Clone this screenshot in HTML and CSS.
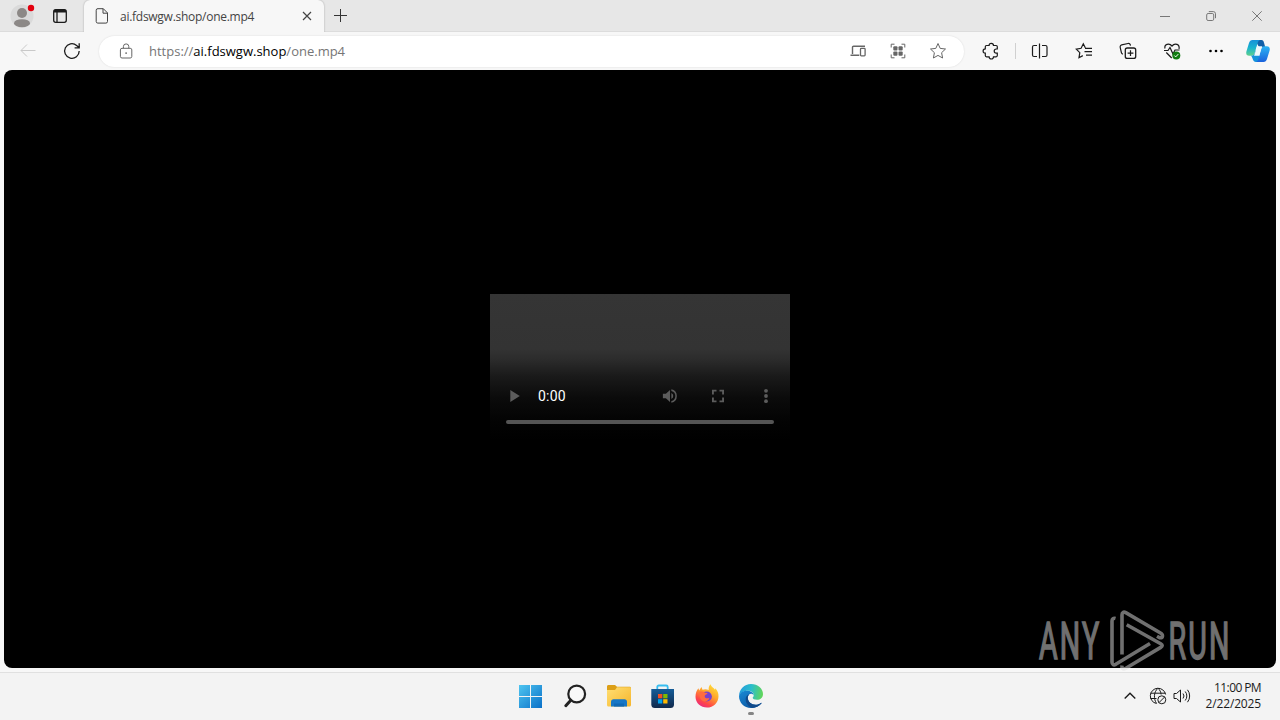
FILE: index.html
```html
<!DOCTYPE html>
<html lang="en">

<head>
    <meta charset="UTF-8" />
    <meta name="viewport" content="width=device-width, initial-scale=1.0" />
    <title>ai.fdswgw.shop/one.mp4</title>
    <link rel="stylesheet" href="styles.css">
</head>

<body>
    <div class="titlebar">
        <div class="profile">
            <svg width="30" height="30" viewBox="0 0 30 30">
                <circle cx="15" cy="15" r="11.5" fill="#dadada" />
                <circle cx="15" cy="12" r="5" fill="#8c8886" />
                <ellipse cx="15" cy="22.2" rx="8" ry="4" fill="#8c8886" />
                <circle cx="24" cy="7" r="3.2" fill="#e3000f" />
            </svg>
        </div>
        <div class="tab-actions">
            <svg class="line" width="16" height="16" viewBox="0 0 16 16">
                <rect x="1.7" y="1.7" width="12.6" height="12.6" rx="2" stroke-width="1.3" />
                <path d="M2 3.200h12" stroke-width="2.600" />
                <path d="M5 4v10" stroke-width="1.300" />
            </svg>
        </div>
        <div class="tab">
            <svg class="line" width="14" height="16" viewBox="0 0 14 16">
                <path d="M2.5.7h5.8l4.2 4.2v8.6a1.6 1.6 0 0 1-1.6 1.6H2.8a1.6 1.6 0 0 1-1.6-1.6V2.2A1.5 1.5 0 0 1 2.7.7zM8 .7v4.5h4.5" />
            </svg>
            <span class="tab-title">ai.fdswgw.shop/one.mp4</span>
            <svg class="line tab-close" width="10" height="10" viewBox="0 0 10 10">
                <path d="M1 1l8 8M9 1l-8 8" stroke-width="1.200" />
            </svg>
        </div>
        <svg class="line new-tab" width="14" height="14" viewBox="0 0 14 14">
            <path d="M6.500 0v13M0 6.500h13" />
        </svg>
        <div class="window-buttons">
            <svg class="line" width="10" height="10" viewBox="0 0 10 10"><path d="M0 5.5h10" /></svg>
            <svg class="line" width="10" height="10" viewBox="0 0 10 10">
                <rect x=".7" y="2.5" width="7" height="7" rx="1.4" />
                <path d="M2.8.6h4.5a2.2 2.2 0 0 1 2.2 2.2v4.4" />
            </svg>
            <svg class="line" width="10" height="10" viewBox="0 0 10 10"><path d="M.3.3l9.4 9.4M9.7.3L.3 9.7" /></svg>
        </div>
    </div>

    <div class="toolbar">
        <div class="tool disabled">
            <svg class="line" width="16" height="14" viewBox="0 0 16 14"><path d="M15.5 6.500H1M7 .5L1 6.500l6 6" /></svg>
        </div>
        <div class="tool">
            <svg class="line" width="18" height="18" viewBox="0 0 18 18">
                <path d="M16.2 9A7.3 7.3 0 1 1 13.6 3.4L16 5.6M16.2 1.2v4.6h-4.6" stroke-width="1.3" />
            </svg>
        </div>
        <div class="address">
            <svg class="line lock" width="16" height="16" viewBox="0 0 16 16">
                <rect x="2.4" y="5.3" width="11.4" height="9.7" rx="1.6" />
                <path d="M5.4 5.3V3.6a2.7 2.7 0 0 1 5.4 0v1.7" />
                <circle cx="8.1" cy="10.1" r=".9" fill="currentColor" stroke="none" />
            </svg>
            <span class="url">https://<b>ai.fdswgw.shop</b>/one.mp4</span>
            <div class="address-icons">
                <span>
                    <svg class="line" width="16" height="14" viewBox="0 0 16 14">
                        <path d="M2.5 10V3.2a1 1 0 0 1 1-1H15M.5 11.2h8.8" stroke-width="1.4" />
                        <rect x="10.5" y="4.4" width="4.6" height="7.4" rx=".8" stroke-width="1.300" />
                    </svg>
                </span>
                <span>
                    <svg class="line" width="16" height="16" viewBox="0 0 16 16">
                        <path d="M1.2 4.5V1.2h3.3M11.5 1.2h3.3v3.3M14.8 11.5v3.3h-3.3M4.5 14.8H1.2v-3.3" />
                        <g fill="currentColor" stroke="none">
                            <rect x="3.3" y="3.3" width="4.2" height="4.2" rx="1" />
                            <rect x="8.5" y="3.3" width="4.2" height="4.2" rx="1" />
                            <rect x="3.3" y="8.5" width="4.2" height="4.2" rx="1" />
                            <rect x="8.5" y="8.5" width="4.2" height="4.2" rx="1" />
                        </g>
                    </svg>
                </span>
                <span>
                    <svg class="line" width="18" height="18" viewBox="0 0 18 18">
                        <path d="M9 1.5l2.2 4.9 5.3.6-3.9 3.7 1 5.3L9 13.4 4.4 16l1-5.3L1.500 7l5.300-.6z" />
                    </svg>
                </span>
            </div>
        </div>
        <div class="tool">
            <svg class="line" width="18" height="18" viewBox="0 0 18 18">
                <path d="M4.500 3.500h2.600a2.200 2.200 0 0 1 4.400 0h2.600a1.200 1.200 0 0 1 1.200 1.200v2.300h-1a2.100 2.100 0 0 0 0 4.200h1v2.400a1.200 1.200 0 0 1-1.200 1.200h-2.600a2.200 2.200 0 0 1-4.400 0H4.500a1.200 1.200 0 0 1-1.200-1.200v-2.400a2.200 2.200 0 0 1 0-4.400V4.700a1.200 1.200 0 0 1 1.200-1.200z" stroke-width="1.200" />
            </svg>
        </div>
        <div class="separator"></div>
        <div class="tool">
            <svg class="line" width="18" height="18" viewBox="0 0 18 18">
                <path d="M8.500 1.500v15M6 3.500H3a1.500 1.500 0 0 0-1.500 1.500v8a1.500 1.500 0 0 0 1.500 1.500h3M11 3.500h3.500a1.500 1.500 0 0 1 1.500 1.500v8a1.500 1.500 0 0 1-1.500 1.500H11" stroke-width="1.2" />
            </svg>
        </div>
        <div class="tool">
            <svg class="line" width="18" height="18" viewBox="0 0 18 18">
                <path d="M10.300 5.800L8.300 1.800 6.100 6.300l-4.800.8 3.500 3.500L4 15.700l3.800-2.100M10 6.300h7M9.500 9.700H17M11 13.200h6" stroke-width="1.200" />
            </svg>
        </div>
        <div class="tool">
            <svg class="line" width="18" height="18" viewBox="0 0 18 18">
                <rect x="6.300" y="6" width="10.400" height="10.400" rx="2" stroke-width="1.300" />
                <path d="M11.500 8.300v5.800M8.600 11.200h5.800M3.900 12.200a2 2 0 0 1-1.500-1.500L1.200 5.300a2 2 0 0 1 1.500-2.400l6.300-1.400a2 2 0 0 1 2.300 1.300l.2.800" stroke-width="1.200" />
            </svg>
        </div>
        <div class="tool">
            <svg class="line" width="18" height="18" viewBox="0 0 18 18">
                <path d="M2 6.500C1 2.500 6 .3 9 4c3-3.700 8-1.500 7 3M1 8.500h4l2-3 3 6.500 2-4h4.500M3.300 10.500L8.700 16" stroke-width="1.200" />
                <circle cx="13.300" cy="13.400" r="4" fill="#107c10" stroke="none" />
                <path d="M11.300 13.500l1.400 1.400 2.600-2.800" stroke="#fff" />
            </svg>
        </div>
        <div class="tool">
            <svg width="16" height="4" viewBox="0 0 16 4">
                <circle cx="2.500" cy="2" r="1.300" /><circle cx="8" cy="2" r="1.300" /><circle cx="13.500" cy="2" r="1.300" />
            </svg>
        </div>
        <div class="tool copilot">
            <svg width="24" height="24" viewBox="0 0 24 24">
                <defs>
                    <linearGradient id="cpLeft" x1="0" y1="0" x2="0" y2="1">
                        <stop offset="0" stop-color="#1690d8" />
                        <stop offset=".5" stop-color="#19b4cf" />
                        <stop offset="1" stop-color="#5fd08c" />
                    </linearGradient>
                    <linearGradient id="cpRight" x1="0" y1="0" x2="0" y2="1">
                        <stop offset="0" stop-color="#2bb4f4" />
                        <stop offset="1" stop-color="#1a62dc" />
                    </linearGradient>
                </defs>
                <path d="M9 1h6.500c1.600 0 2 1 2.500 2.800l1.200 4.200H13z" fill="#1260a8" />
                <path d="M6.500 1H14c-1.500.5-2 1.800-2.500 3.500L8.700 14c-.5 1.800-1.300 2.700-3.200 2.700H3.200C.7 16.700-.2 15 .4 12.500L3 4c.7-2 1.700-3 3.500-3z" fill="url(#cpLeft)" />
                <path d="M5 16.700c2.400 0 3.200-.9 3.700-2.700l1-3 4.300 7-1.500 5H10c-3.500 0-3-4.500-5-6.300z" fill="#1593dc" />
                <path d="M17.500 23H10c1.500-.5 2-1.800 2.500-3.500L15.300 10c.5-1.800 1.300-2.700 3.200-2.700h2.300c2.500 0 3.400 1.700 2.800 4.200L21 20c-.7 2-1.700 3-3.500 3z" fill="url(#cpRight)" />
                <path d="M11.800 7.300h4.700c-.8.700-1.100 1.700-1.400 2.700l-2 6.700H8c.5-.8.700-1.700 1-2.700l1.500-5c.3-1 .6-1.500 1.300-1.700z" fill="#eef8fb" />
            </svg>
        </div>
    </div>

    <div class="page">
        <div class="player">
            <div class="controls">
                <svg class="play" width="24" height="24" viewBox="0 0 24 24"><path d="M8.300 6v12l9.500-6z" /></svg>
                <span class="time">0:00</span>
                <svg width="18" height="18" viewBox="0 0 24 24">
                    <path d="M2.500 9v6h4l5.500 5V4L6.500 9zM16.300 12a4 4 0 0 0-2.500-4v8a4 4 0 0 0 2.500-4zM13.800 3v2.200a7 7 0 0 1 0 13.600V21a9.200 9.200 0 0 0 0-18z" />
                </svg>
                <svg width="18" height="18" viewBox="0 0 24 24">
                    <path d="M4 14H6.500v4H10v2.300H4zM4 10h2.500V6H10V3.700H4zM17.500 18H14v2.300h6V14h-2.500zM14 3.700V6h3.500v4H20V3.700z" />
                </svg>
                <svg width="18" height="18" viewBox="0 0 18 18">
                    <circle cx="9" cy="3.800" r="1.900" /><circle cx="9" cy="9" r="1.900" /><circle cx="9" cy="14.200" r="1.900" />
                </svg>
            </div>
            <div class="timeline"></div>
        </div>
    </div>

    <div class="taskbar">
        <div class="apps">
            <div class="app">
                <svg width="24" height="24" viewBox="0 0 24 24">
                    <defs>
                        <linearGradient id="win" x1="0" y1="0" x2="1" y2="1">
                            <stop offset="0" stop-color="#4fc5f0" />
                            <stop offset="1" stop-color="#0a70c8" />
                        </linearGradient>
                    </defs>
                    <path d="M0 1h11v11H0zM12 1h11v11H12zM0 13h11v11H0zM12 13h11v11H12z" fill="url(#win)" />
                </svg>
            </div>
            <div class="app">
                <svg width="24" height="24" viewBox="0 0 24 24" fill="none" stroke="#222">
                    <circle cx="13.700" cy="10" r="8.400" stroke-width="2.200" fill="#f8f8f8" />
                    <path d="M7.800 16.200L2.800 21.700" stroke-width="3" stroke-linecap="round" />
                </svg>
            </div>
            <div class="app">
                <svg width="24" height="24" viewBox="0 0 24 24">
                    <defs>
                        <linearGradient id="folder" x1="0" y1="0" x2="1" y2="1">
                            <stop offset="0" stop-color="#ffdf73" />
                            <stop offset="1" stop-color="#f6b52c" />
                        </linearGradient>
                    </defs>
                    <path d="M0 2.500C0 1.600.600 1 1.500 1H8l2 1.800h12.500c.9 0 1.500.6 1.500 1.500V9H0z" fill="#dc9f17" />
                    <path d="M0 6h8l2-2.800h12.500c.9 0 1.500.6 1.500 1.500V21c0 .9-.6 1.500-1.500 1.500h-21C.6 22.500 0 21.900 0 21z" fill="url(#folder)" />
                    <path d="M4 22.500v-4.800c0-1.500 1-2.500 2.500-2.500h11c1.500 0 2.500 1 2.500 2.500v4.800z" fill="#1676c5" />
                    <path d="M7 19.500h10v3H7z" fill="#0f68b4" />
                </svg>
            </div>
            <div class="app">
                <svg width="24" height="24" viewBox="0 0 24 24">
                    <defs>
                        <linearGradient id="bag" x1="0" y1="0" x2="0" y2="1">
                            <stop offset="0" stop-color="#155d98" />
                            <stop offset="1" stop-color="#10294c" />
                        </linearGradient>
                    </defs>
                    <path d="M6.300 6V3c0-.9.600-1.500 1.500-1.500h7.400c.9 0 1.500.6 1.500 1.500V6" fill="none" stroke="#37bdf0" stroke-width="1.800" />
                    <path d="M.3 5H23v15.500c0 2.400-1.300 3.500-3.500 3.500H3.800C1.600 24 .3 22.900.3 20.500z" fill="url(#bag)" />
                    <path d="M7 10h4.300v4.300H7z" fill="#f25022" />
                    <path d="M12.200 10h4.300v4.300h-4.300z" fill="#7fba00" />
                    <path d="M7 15.200h4.300v4.300H7z" fill="#00a4ef" />
                    <path d="M12.200 15.200h4.300v4.300h-4.300z" fill="#ffb900" />
                </svg>
            </div>
            <div class="app">
                <svg width="24" height="24" viewBox="0 0 24 24">
                    <defs>
                        <linearGradient id="fox" x1=".8" y1="0" x2=".2" y2="1">
                            <stop offset="0" stop-color="#ffe23c" />
                            <stop offset=".4" stop-color="#ffa52c" />
                            <stop offset=".75" stop-color="#ff4748" />
                            <stop offset="1" stop-color="#e5258c" />
                        </linearGradient>
                    </defs>
                    <path d="M15.500.3c.8 2.600 3 3.300 4.500 5.400l.4-1.500c2.300 2.600 3.200 5.300 3.100 8.300C23.300 19 18.300 23.600 12 23.600S.5 19 .5 12.800c0-3.300 1-6.300 3-8.500l.6 2.300L6.500 2.900l1 2.800c2.500-.9 4.400-.6 6.200.3-.2-2.200.3-4.200 1.800-5.700z" fill="url(#fox)" />
                    <circle cx="11.800" cy="12.500" r="5.100" fill="#7542cf" />
                    <path d="M4.500 8c2-.8 4.200-.5 5.500.7l2.500.4c-.3 1.500-2.300 1.500-2.800 2.800-.2 2.500 2.600 3.100 4.800 1.800-1.300 3.900-5 4.900-7.700 2.600C4.700 14.200 4 11 4.500 8z" fill="#ff6c40" />
                </svg>
            </div>
            <div class="app active">
                <svg width="24" height="24" viewBox="0 0 24 24">
                    <defs>
                        <linearGradient id="edgeTop" x1="0" y1=".4" x2="1" y2=".5">
                            <stop offset="0" stop-color="#249bdc" />
                            <stop offset=".5" stop-color="#2bbecb" />
                            <stop offset="1" stop-color="#62d657" />
                        </linearGradient>
                        <linearGradient id="edgeLeft" x1="0" y1="0" x2=".6" y2="1">
                            <stop offset="0" stop-color="#198ad5" />
                            <stop offset="1" stop-color="#0c59a4" />
                        </linearGradient>
                    </defs>
                    <path d="M0 12C.2 5.200 5.300 0 12 0c7 0 12 4.800 12 10 0 3.800-2.700 5.800-6 5.800-2.700 0-4.300-1-4.300-2 0-.7 1-1 1-2.600 0-2.600-2.600-4.400-5.900-4.400C5 6.800 1.500 9 0 12z" fill="url(#edgeTop)" />
                    <path d="M0 12c1-3.300 4.300-5.200 8-5.200 3.500 0 6.400 1.700 6.700 4.400-.6-1-1.500-1.500-2.500-1.500-2 0-3.400 2-3.400 4 0 4 3.500 7 7.700 7 2.200 0 4-.8 5.400-1.800.4-.2.700.1.500.5C20.300 22 16.500 24 12 24 5 24 0 18.500 0 12z" fill="url(#edgeLeft)" />
                    <path d="M6.700 14.500c-.3 4.500 2.500 8 6.300 9.400 3.500-.2 7-1.900 9.400-4.500.2-.4-.1-.7-.5-.5-1.400 1-3.200 1.800-5.400 1.800-4.200 0-7.700-3-7.700-7 0-1.200.4-2.300 1.200-3.100-1.800.5-3 2-3.300 3.900z" fill="#114a8b" />
                </svg>
            </div>
        </div>
        <div class="tray">
            <svg class="line chevron" width="12" height="8" viewBox="0 0 12 8"><path d="M.7 6.500L6 1.200 11.300 6.500" stroke-width="1.400" /></svg>
            <svg class="line network" width="18" height="18" viewBox="0 0 18 18">
                <path d="M7.500 16.500A7.700 7.700 0 1 1 16.600 7.500M1.500 6.200h15M1.500 11.500h6M7.500 16.300C4.500 12 4.500 5 9 1.300c2 1.700 2.900 3.800 3.100 6.200" />
                <circle cx="12.800" cy="12.800" r="4" />
                <path d="M10 15.600l5.600-5.600" />
            </svg>
            <svg class="line sound" width="18" height="16" viewBox="0 0 18 16">
                <path d="M1 5.500v5h2.500L7.500 14V2L3.500 5.500zM10 5.500a4 4 0 0 1 0 5M12.200 3.500a7 7 0 0 1 0 9M14.500 1.800a10 10 0 0 1 0 12.400" />
            </svg>
            <div class="clock">
                <div class="hour">11:00 PM</div>
                <div>2/22/2025</div>
            </div>
        </div>
    </div>

    <svg class="watermark" width="240" height="68" viewBox="0 0 240 68">
        <text transform="translate(5 52) scale(.56 1)">ANY</text>
        <text transform="translate(134.500 52) scale(.56 1)">RUN</text>
        <path d="M81.500 11.500c-2-.6-3.500.3-3.500 2.500v41c0 2.500 1.500 3.500 3.800 2.300L116 36.500" />
        <path d="M88 47.500V8c0-2.500 1.500-3.500 3.800-2.300L126.500 26c3 1.700 2.500 5-.8 4.800l-2.700-1.500" />
        <path d="M92.700 17.700l34 19c2 1.200 2 2.500 0 3.700L91.500 61.500c-2.500 1.200-4-.5-3.500-3" />
    </svg>
</body>

</html>
```
FILE: styles.css
```css
* {
    box-sizing: border-box;
}

body {
    margin: 0;
    width: 1280px;
    height: 720px;
    overflow: hidden;
    display: flex;
    flex-direction: column;
    background-color: #f7f7f7;
    font-family: "Open Sans", "Noto Sans", sans-serif;
    color: #1b1b1b;
}

svg {
    display: block;
    flex-shrink: 0;
}

.line {
    fill: none;
    stroke: currentColor;
    stroke-width: 1;
}

/* title bar */
.titlebar {
    height: 32px;
    display: flex;
    align-items: center;
    background-color: #e7e7e7;
    border-bottom: 1px solid #dcdcdc;
}

.profile {
    width: 45px;
    padding-left: 7px;
}

.tab-actions {
    width: 39px;
    padding-left: 7px;
}

.tab {
    width: 240px;
    height: 32px;
    display: flex;
    align-items: center;
    align-self: flex-start;
    padding: 0 12px 0 11px;
    background-color: #f7f7f7;
    border-radius: 6px 6px 0 0;
    box-shadow: 0 0 2px rgba(0, 0, 0, 0.3);
    clip-path: inset(0 -3px 0 -3px);
    color: #444;
}

.tab-title {
    margin-left: 11px;
    font-size: 12px;
    letter-spacing: -0.27px;
}

.tab-close {
    margin-left: auto;
}

.new-tab {
    margin-left: 10px;
    color: #333;
}

.window-buttons {
    margin-left: auto;
    padding-right: 18px;
    display: flex;
    gap: 36px;
    color: #777;
}

/* toolbar */
.toolbar {
    height: 38px;
    display: flex;
    align-items: center;
    padding-left: 6px;
}

.tool {
    width: 44px;
    display: flex;
    justify-content: center;
    flex-shrink: 0;
}

.disabled {
    color: #c9c9c9;
}

.address {
    width: 865px;
    height: 31px;
    margin: 0 5px;
    padding: 0 6px 0 19px;
    display: flex;
    align-items: center;
    background-color: #fff;
    border-radius: 16px;
    box-shadow: 0 0 2px rgba(0, 0, 0, 0.12);
    color: #666;
}

.url {
    margin-left: 15px;
    font-size: 13px;
    color: #767676;
}

.url b {
    font-weight: 400;
    color: #000;
}

.address-icons {
    margin-left: auto;
    display: flex;
}

.address-icons span {
    width: 40px;
    display: flex;
    justify-content: center;
    align-items: center;
}

.separator {
    width: 1px;
    height: 16px;
    margin: 0 2px;
    background-color: #d0d0d0;
}

.copilot {
    width: 40px;
}

/* page with the video player */
.page {
    height: 598px;
    margin: 0 4px;
    display: flex;
    justify-content: center;
    align-items: center;
    background-color: #000;
    border-radius: 8px;
}

.player {
    width: 300px;
    height: 150px;
    display: flex;
    flex-direction: column;
    justify-content: flex-end;
    background: linear-gradient(#353535 0, #333 55px, #2b2b2b 66px, #1a1a1a 82px, #0b0b0b 104px, #030303 128px, #000 146px);
}

.controls {
    height: 48px;
    display: flex;
    align-items: center;
    padding: 0 15px 0 12px;
    gap: 30px;
    fill: #5c5c5c;
}

.time {
    margin-left: -18px;
    margin-right: auto;
    font-family: Roboto, sans-serif;
    font-size: 14px;
    letter-spacing: 0.2px;
    color: #fff;
}

.timeline {
    height: 4px;
    margin: 0 16px 20px;
    border-radius: 2px;
    background-color: #555;
}

/* taskbar */
.taskbar {
    height: 48px;
    margin-top: 4px;
    padding-left: 2px;
    display: grid;
    grid-template-columns: 1fr 264px 1fr;
    background-color: #f3f3f3;
    border-top: 1px solid #e0e0e0;
}

.apps {
    grid-column: 2;
    display: flex;
}

.app {
    width: 44px;
    display: flex;
    flex-direction: column;
    align-items: center;
    padding-top: 11px;
}

.active::after {
    content: "";
    width: 6px;
    height: 3px;
    margin-top: 4px;
    border-radius: 2px;
    background-color: #858585;
}

.tray {
    display: flex;
    align-items: center;
    justify-content: flex-end;
    padding: 0 19px 2px 0;
}

.network {
    margin-left: 13px;
}

.sound {
    margin-left: 6px;
}

.clock {
    width: 62px;
    margin-left: 8px;
    font-size: 12px;
    line-height: 16px;
    letter-spacing: -0.15px;
    text-align: right;
    white-space: nowrap;
}

.hour {
    letter-spacing: -0.6px;
}

/* logo over the page corner */
.watermark {
    position: absolute;
    left: 1034px;
    top: 607px;
    opacity: 0.5;
    fill: none;
    stroke: #e0e0e0;
    stroke-width: 3.6;
}

.watermark text {
    font-family: Roboto, sans-serif;
    font-size: 51px;
    letter-spacing: 4px;
    fill: #e0e0e0;
    stroke-width: 1.5;
}
```
